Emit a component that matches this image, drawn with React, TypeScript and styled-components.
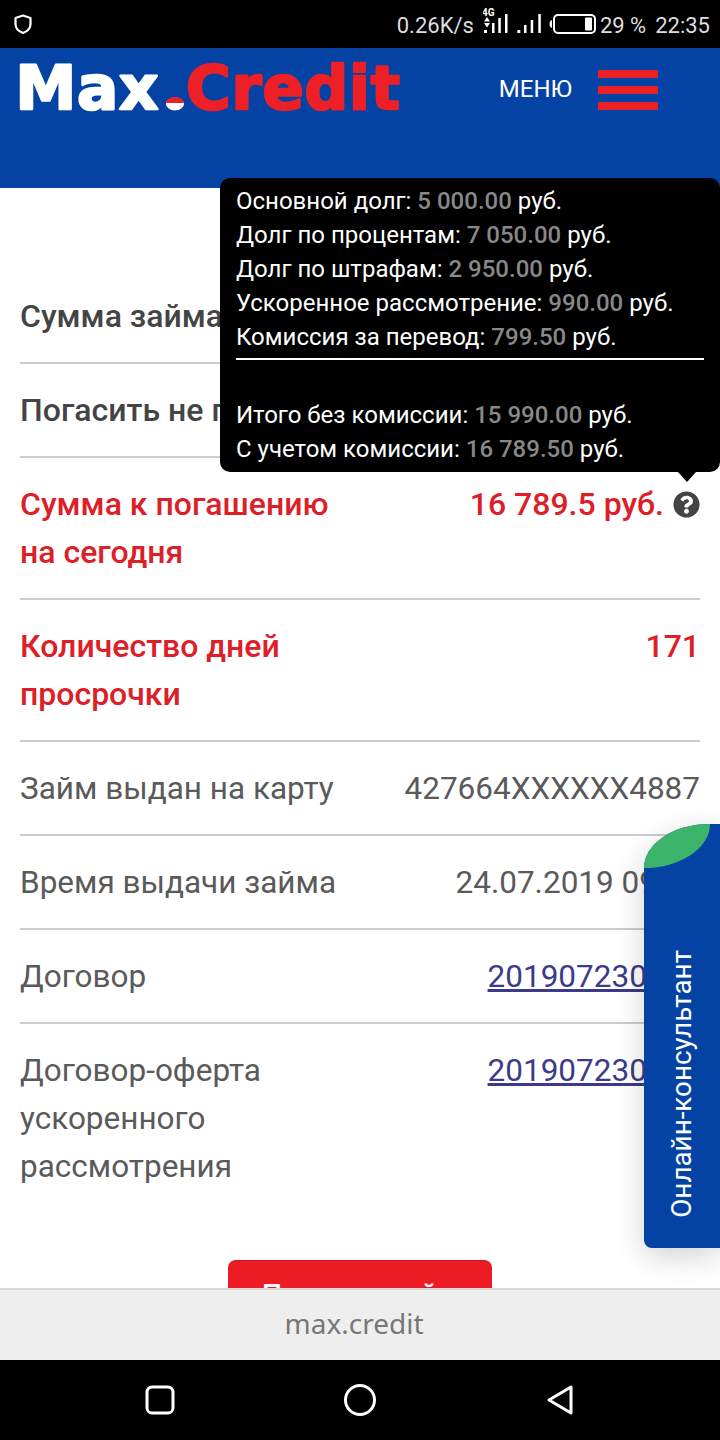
import styled, { createGlobalStyle } from "styled-components";
import { FaQuestionCircle } from "react-icons/fa";

const GlobalStyle = createGlobalStyle`
  html, body {
    margin: 0;
    padding: 0;
    background: #000;
  }
  * {
    box-sizing: border-box;
  }
`;

const tooltipLines = [
  { label: "Основной долг:", sum: "5 000.00" },
  { label: "Долг по процентам:", sum: "7 050.00" },
  { label: "Долг по штрафам:", sum: "2 950.00" },
  { label: "Ускоренное рассмотрение:", sum: "990.00" },
  { label: "Комиссия за перевод:", sum: "799.50" },
];

const tooltipTotals = [
  { label: "Итого без комиссии:", sum: "15 990.00" },
  { label: "С учетом комиссии:", sum: "16 789.50" },
];

export default function App() {
  return (
    <>
      <GlobalStyle />
      <Screen>
        <StatusBar>
          <svg width="20" height="24" viewBox="0 0 20 24" fill="none">
            <path
              d="M10 3.5 L17.5 6 V12 C17.5 16.5 14 19.5 10 21 C6 19.5 2.5 16.5 2.5 12 V6 Z"
              stroke="#fff"
              strokeWidth="2.2"
              strokeLinejoin="round"
            />
          </svg>
          <StatusRight>
            <StatusText>0.26K/s</StatusText>
            <NetworkIcon />
            <BatteryIcon />
            <StatusText>29 %</StatusText>
            <ClockText>22:35</ClockText>
          </StatusRight>
        </StatusBar>

        <Header>
          <LogoMark />
          <MenuLabel>МЕНЮ</MenuLabel>
          <Burger>
            <BurgerLine />
            <BurgerLine />
            <BurgerLine />
          </Burger>
        </Header>

        <Content>
          <Table>
            <Row>
              <Label $kind="strong">Сумма займа</Label>
              <Value $kind="strong">5 000 руб.</Value>
            </Row>
            <Row>
              <Label $kind="strong">Погасить не позднее</Label>
              <Value $kind="strong">23.08.2019</Value>
            </Row>
            <Row>
              <Label $kind="alert">
                Сумма к погашению
                <br />
                на сегодня
              </Label>
              <Value $kind="alert">
                16 789.5 руб.
                <FaQuestionCircle size={27} color="#444" />
              </Value>
            </Row>
            <Row>
              <Label $kind="alert">
                Количество дней
                <br />
                просрочки
              </Label>
              <Value $kind="alert">171</Value>
            </Row>
            <Row>
              <Label>Займ выдан на карту</Label>
              <Value>427664XXXXXX4887</Value>
            </Row>
            <Row>
              <Label>Время выдачи займа</Label>
              <Value>24.07.2019 09:14</Value>
            </Row>
            <Row>
              <Label>Договор</Label>
              <ContractLink href="#">201907230123</ContractLink>
            </Row>
            <Row $last>
              <Label>
                Договор-оферта
                <br />
                ускоренного
                <br />
                рассмотрения
              </Label>
              <ContractLink href="#">201907230123</ContractLink>
            </Row>
          </Table>
          <PayButton>Погасить займ</PayButton>

          <Tooltip>
            {tooltipLines.map((line) => (
              <TooltipLine key={line.label}>
                {line.label} <TooltipSum>{line.sum}</TooltipSum> руб.
              </TooltipLine>
            ))}
            <TooltipDivider />
            {tooltipTotals.map((line) => (
              <TooltipLine key={line.label}>
                {line.label} <TooltipSum>{line.sum}</TooltipSum> руб.
              </TooltipLine>
            ))}
          </Tooltip>

          <ChatWidget>
            <ChatLeaf />
            <ChatText>Онлайн-консультант</ChatText>
          </ChatWidget>
        </Content>

        <UrlBar>max.credit</UrlBar>

        <NavBar>
          <svg width="30" height="30" viewBox="0 0 30 30" fill="none">
            <rect x="2" y="2" width="26" height="26" rx="5" stroke="#fff" strokeWidth="3" />
          </svg>
          <svg width="34" height="34" viewBox="0 0 34 34" fill="none">
            <circle cx="17" cy="17" r="14.5" stroke="#fff" strokeWidth="3" />
          </svg>
          <svg width="30" height="32" viewBox="0 0 30 32" fill="none">
            <path
              d="M26 3 V29 L4 16 Z"
              stroke="#fff"
              strokeWidth="3"
              strokeLinejoin="round"
            />
          </svg>
        </NavBar>
      </Screen>
    </>
  );
}

function LogoMark() {
  return (
    <svg
      width="396"
      height="78"
      viewBox="0 -12 396 78"
      fontFamily="'DejaVu Sans', sans-serif"
      fontSize="61"
      fontWeight="700"
      letterSpacing="0.8"
      strokeWidth="2.5"
      strokeLinejoin="round"
    >
      <text x="1.5" y="48.75" fill="#fff" stroke="#fff">
        Max
      </text>
      <ellipse cx="161" cy="44" rx="9" ry="6.5" fill="#fff" />
      <path d="M152 43 A9 6 0 0 1 170 43 Z" fill="#ed2027" />
      <text x="172" y="48.75" fill="#ed2027" stroke="#ed2027">
        Credit
      </text>
    </svg>
  );
}

function NetworkIcon() {
  return (
    <svg width="58" height="36" viewBox="0 0 58 36" fill="#fff">
      <text x="-1" y="10" fontFamily="Roboto, sans-serif" fontSize="10" fontWeight="700" fill="#fff">
        4G
      </text>
      <path d="M1 15.5 H7 L4 11 Z M1 17 H7 L4 21.5 Z" />
      <rect x="1" y="24" width="3" height="3" />
      <rect x="9" y="17" width="2.5" height="10" />
      <rect x="15.3" y="12" width="2.5" height="15" />
      <rect x="22" y="8" width="2.5" height="19" />
      <rect x="34.3" y="24" width="3" height="3" />
      <rect x="41" y="19" width="2.5" height="8" />
      <rect x="47.7" y="14" width="2.5" height="13" />
      <rect x="55.3" y="8" width="2.5" height="19" />
    </svg>
  );
}

function BatteryIcon() {
  return (
    <svg width="47" height="22" viewBox="0 0 47 22" fill="none">
      <path d="M3 7 V15 C1.4 14.5 0.5 13 0.5 11 C0.5 9 1.4 7.5 3 7 Z" fill="#fff" />
      <rect x="5" y="2" width="41" height="18" rx="4" stroke="#fff" strokeWidth="2" />
      <rect x="36" y="4.5" width="7" height="13" rx="1" fill="#fff" />
    </svg>
  );
}

const Screen = styled.div`
  width: 720px;
  height: 1440px;
  display: flex;
  flex-direction: column;
  overflow: hidden;
  font-family: Roboto, "Liberation Sans", sans-serif;
  background: #fff;
`;

const StatusBar = styled.div`
  height: 48px;
  flex: none;
  display: flex;
  align-items: center;
  justify-content: space-between;
  padding: 0 10px 0 13px;
  background: #000;
`;

const StatusRight = styled.div`
  display: flex;
  align-items: center;
  gap: 4px;

  > svg:first-of-type {
    margin: 0 4px 0 5px;
  }
`;

const StatusText = styled.span`
  padding-top: 2px;
  color: #ddd;
  font-size: 22px;
`;

const ClockText = styled(StatusText)`
  margin-left: 5px;
`;

const Header = styled.header`
  height: 140px;
  flex: none;
  display: flex;
  align-items: flex-start;
  padding: 0 62px 0 14px;
  background: #0443a3;
`;

const MenuLabel = styled.span`
  margin: 28px 26px 0 auto;
  color: #fff;
  font-size: 24px;
  line-height: 26px;
`;

const Burger = styled.div`
  width: 60px;
  margin-top: 22px;
  display: flex;
  flex-direction: column;
  gap: 8px;
`;

const BurgerLine = styled.span`
  height: 8px;
  background: #ed2027;
`;

const Content = styled.main`
  position: relative;
  flex: 1;
  min-height: 0;
  padding: 82px 20px 0;
  background: #fff;
`;

const Table = styled.div`
  display: flex;
  flex-direction: column;
`;

const Row = styled.div<{ $last?: boolean }>`
  display: flex;
  justify-content: space-between;
  padding: 22px 0;
  border-bottom: 2px solid ${({ $last }) => ($last ? "transparent" : "#ccc")};
  font-size: 31.5px;
  line-height: 48px;
`;

type TextKind = "plain" | "strong" | "alert";

const kindColor = { plain: "#5a5a5a", strong: "#444", alert: "#dd2027" };

const Label = styled.div<{ $kind?: TextKind }>`
  padding-top: ${({ $kind = "plain" }) => ($kind === "plain" ? "1px" : "0")};
  margin-bottom: ${({ $kind = "plain" }) => ($kind === "plain" ? "-1px" : "0")};
  color: ${({ $kind = "plain" }) => kindColor[$kind]};
  font-size: ${({ $kind = "plain" }) => ($kind === "plain" ? "31.5px" : "32px")};
  font-weight: ${({ $kind = "plain" }) => ($kind === "plain" ? 400 : 500)};
  white-space: nowrap;
`;

const Value = styled.div<{ $kind?: TextKind }>`
  display: flex;
  align-items: center;
  gap: 9px;
  height: 48px;
  padding-top: ${({ $kind = "plain" }) => ($kind === "plain" ? "2px" : "0")};
  color: ${({ $kind = "plain" }) => kindColor[$kind]};
  font-size: ${({ $kind = "plain" }) => ($kind === "plain" ? "31.5px" : "32px")};
  font-weight: ${({ $kind = "plain" }) => ($kind === "plain" ? 400 : 500)};
  white-space: nowrap;
`;

const ContractLink = styled.a`
  align-self: flex-start;
  padding-top: 1px;
  margin-bottom: -1px;
  color: #3c3a8a;
  white-space: nowrap;
`;

const PayButton = styled.button`
  display: block;
  width: 264px;
  height: 68px;
  margin: 46px auto 0;
  border: none;
  border-top: 1px solid #c81a20;
  border-radius: 8px;
  background: #ed1c24;
  color: #fff;
  font-family: inherit;
  font-size: 28px;
  font-weight: 500;
`;

const Tooltip = styled.div`
  position: absolute;
  top: -10px;
  left: 220px;
  width: 500px;
  height: 294px;
  padding: 6px 16px 0;
  border-radius: 10px;
  background: #000;
  color: #fff;

  &::after {
    content: "";
    position: absolute;
    top: 100%;
    left: 458px;
    border-style: solid;
    border-width: 10px 9px 0;
    border-color: #000 transparent transparent;
  }
`;

const TooltipLine = styled.div`
  font-size: 24px;
  line-height: 34px;
  white-space: nowrap;
`;

const TooltipSum = styled.span`
  color: #888;
  font-weight: 500;
`;

const TooltipDivider = styled.div`
  height: 2px;
  margin: 4px 0 38px;
  background: #fff;
`;

const ChatWidget = styled.aside`
  position: absolute;
  top: 636px;
  right: 0;
  width: 76px;
  height: 424px;
  display: flex;
  align-items: flex-end;
  justify-content: center;
  padding: 0 1px 30px 0;
  border-radius: 66px 0 0 8px / 44px 0 0 8px;
  background: #0443a3;
  box-shadow: 0 8px 30px rgba(0, 0, 0, 0.18);
`;

const ChatLeaf = styled.span`
  position: absolute;
  top: 0;
  left: 0;
  width: 66px;
  height: 44px;
  border-radius: 100% 0 100% 0;
  background: #3cb56a;
`;

const ChatText = styled.span`
  writing-mode: vertical-rl;
  transform: rotate(180deg);
  color: #fff;
  font-size: 27.8px;
  line-height: 32px;
  white-space: nowrap;
`;

const UrlBar = styled.div`
  position: relative;
  height: 72px;
  flex: none;
  display: flex;
  align-items: center;
  justify-content: center;
  padding: 0 12px 4px 0;
  border-top: 2px solid #d8d8d8;
  background: #eee;
  color: #777;
  font-family: "Noto Sans", sans-serif;
  font-size: 28px;
`;

const NavBar = styled.nav`
  position: relative;
  height: 80px;
  flex: none;
  display: flex;
  align-items: center;
  justify-content: space-between;
  padding: 0 145px;
  background: #000;
`;
